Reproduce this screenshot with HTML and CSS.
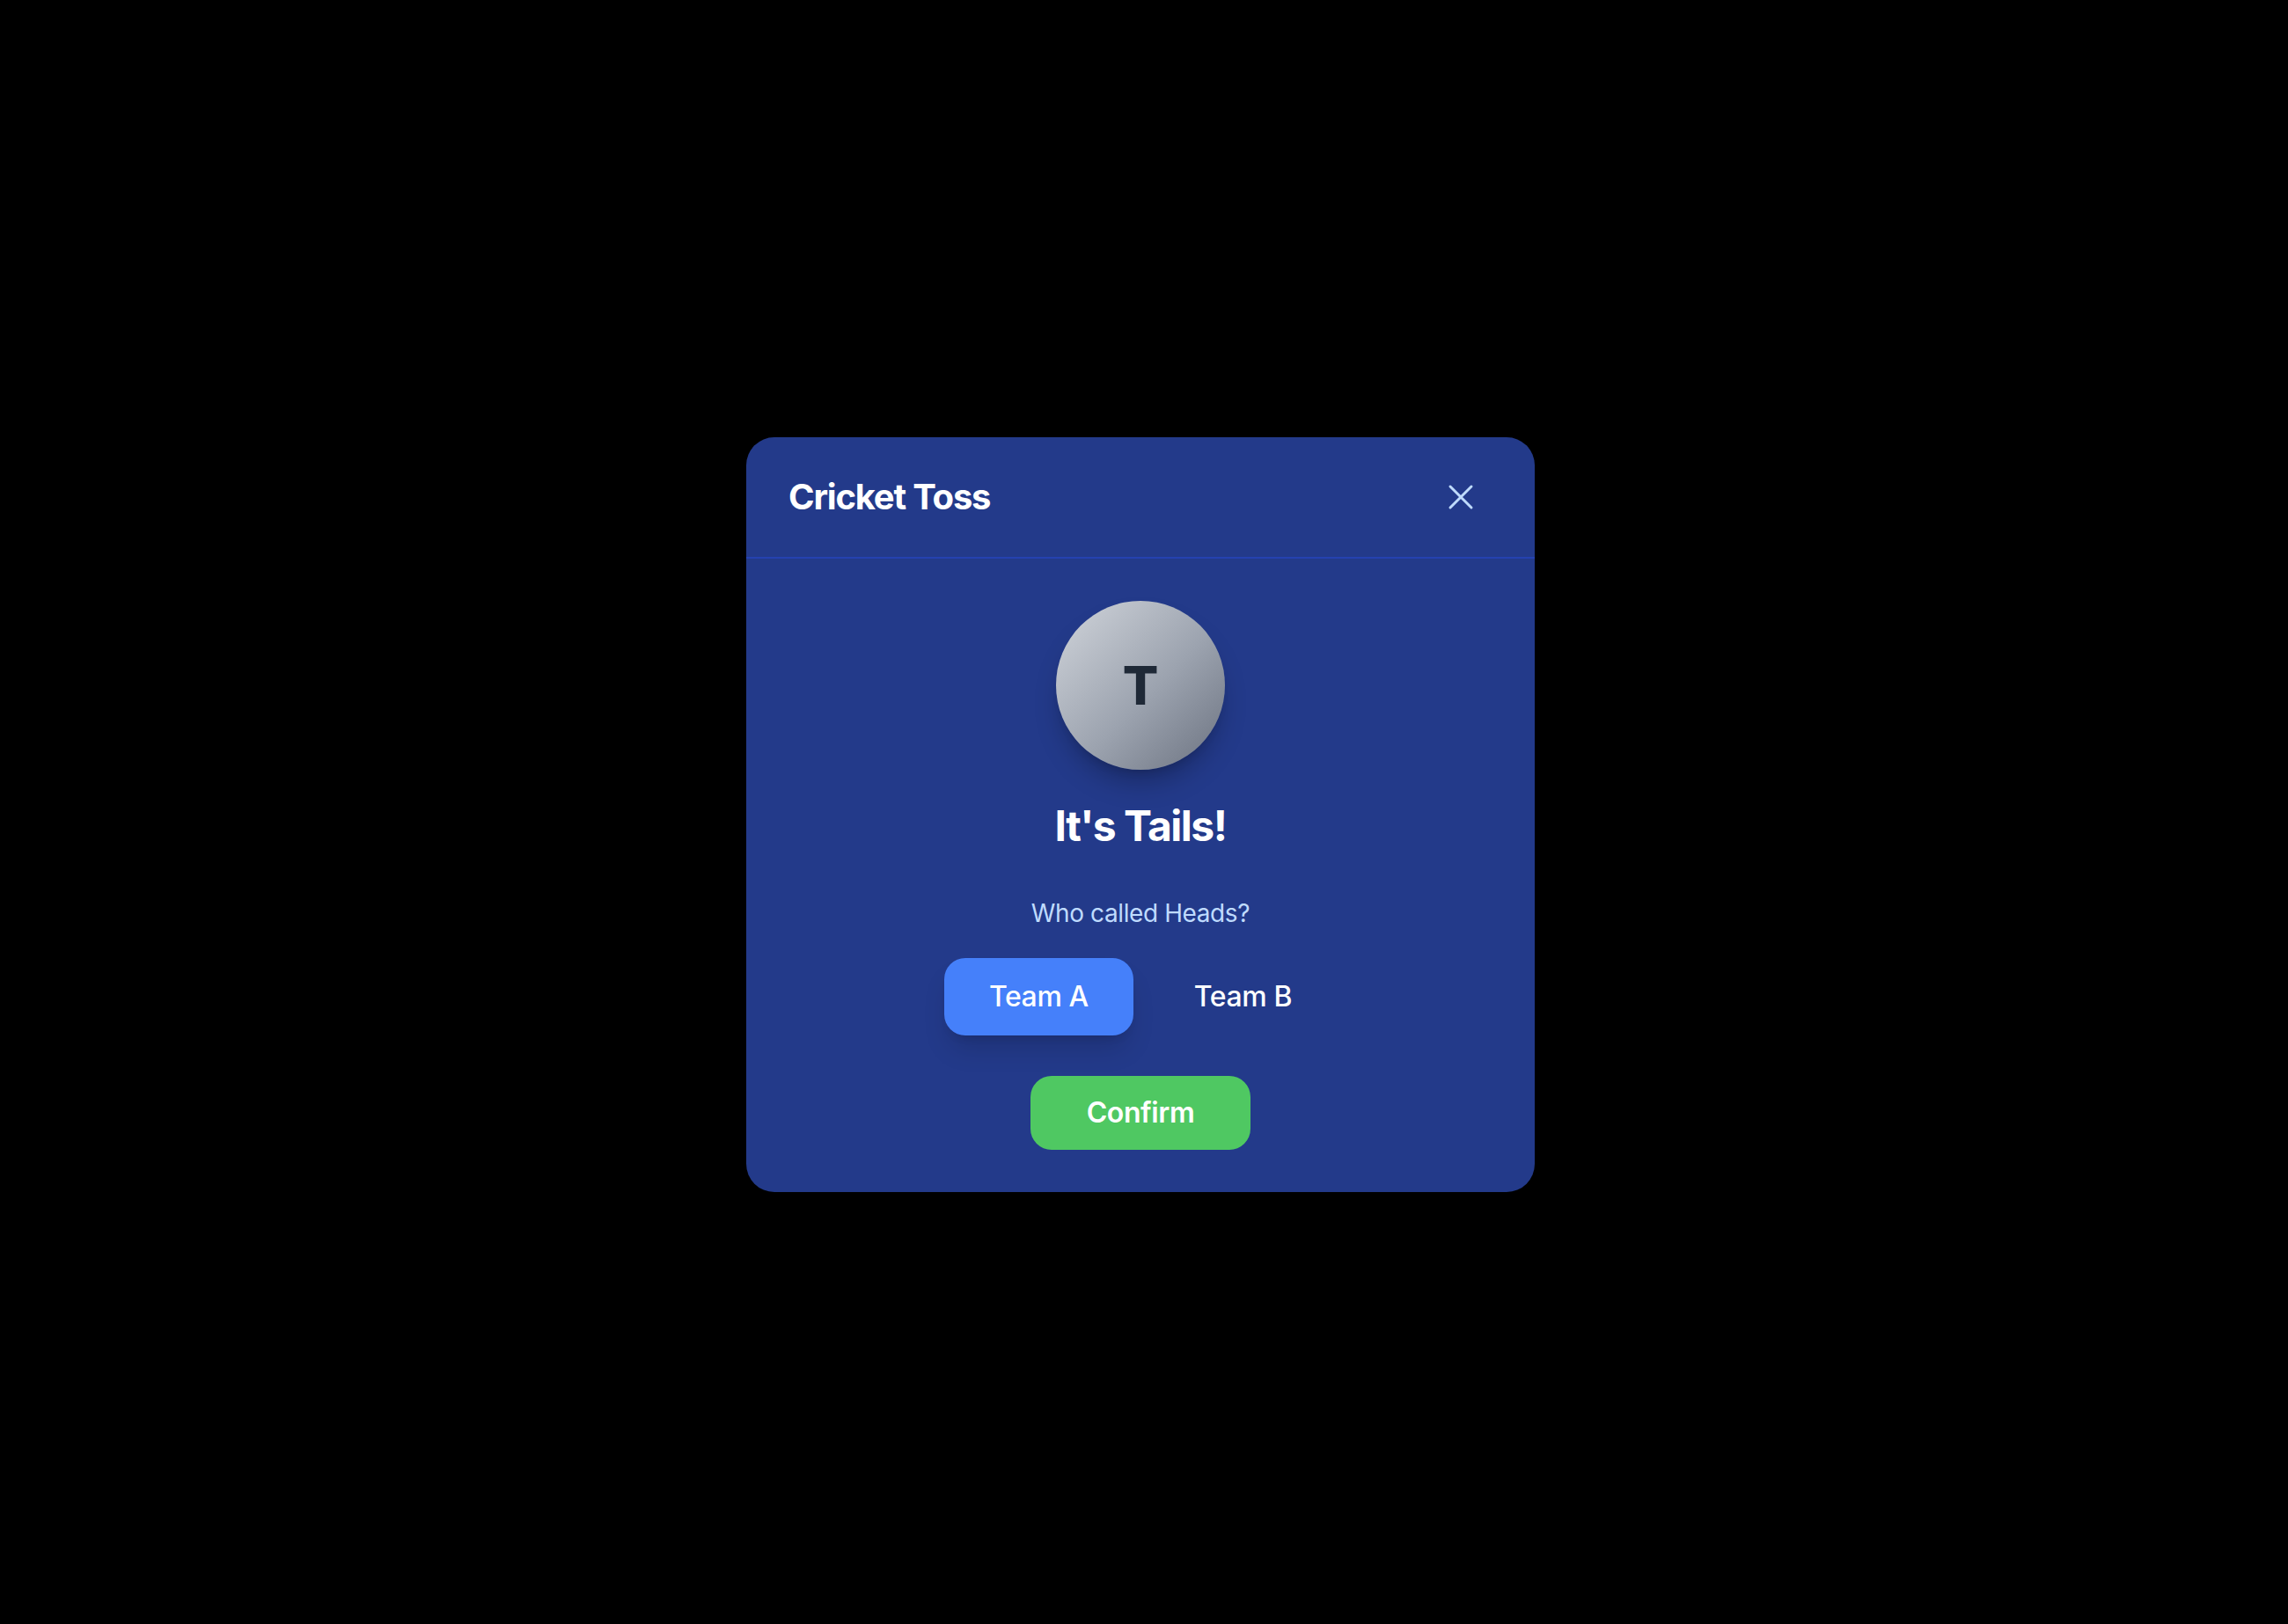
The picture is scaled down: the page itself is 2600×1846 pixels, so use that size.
FILE: index.html
```html
<!DOCTYPE html>
<html lang="en">
<head>
<meta charset="utf-8">
<title>Cricket Toss</title>
<link rel="stylesheet" href="styles.css">
</head>
<body>
<div class="modal">
  <div class="modal-header">
    <h2 class="modal-title">Cricket Toss</h2>
    <button class="close-btn" aria-label="Close">
      <svg width="48" height="48" viewBox="0 0 24 24" fill="none" stroke="currentColor" stroke-width="1.5" stroke-linecap="round"><path d="M6 6L18 18M18 6L6 18"/></svg>
    </button>
  </div>
  <div class="modal-body">
    <div class="coin"><span>T</span></div>
    <h3 class="result">It's Tails!</h3>
    <p class="question">Who called Heads?</p>
    <div class="teams">
      <button class="team team-active">Team A</button>
      <button class="team">Team B</button>
    </div>
    <button class="confirm">Confirm</button>
  </div>
</div>
</body>
</html>
```
FILE: styles.css
```css
html, body {
  margin: 0;
  padding: 0;
  height: 100%;
}
body {
  background: #000;
  font-family: Inter, "Noto Sans", sans-serif;
  display: flex;
  align-items: center;
  justify-content: center;
}
.modal {
  width: 896px;
  background: #233a8a;
  border-radius: 32px;
  margin-right: 8px;
  margin-top: 6px;
  overflow: hidden;
}
.modal-header {
  display: flex;
  align-items: center;
  justify-content: space-between;
  padding: 40px 48px;
  border-bottom: 2px solid #2541b0;
}
.modal-title {
  margin: 0;
  color: #fff;
  font-size: 40px;
  line-height: 56px;
  font-weight: 700;
  letter-spacing: -1.2px;
}
.close-btn {
  background: none;
  border: 0;
  padding: 0;
  margin-right: 12px;
  color: #bfdbfe;
  display: flex;
}
.modal-body {
  padding: 48px 48px 48px;
  display: flex;
  flex-direction: column;
  align-items: center;
}
.coin {
  width: 192px;
  height: 192px;
  border-radius: 50%;
  background: linear-gradient(135deg, #d1d5db 0%, #9ca3af 55%, #6b7280 100%);
  box-shadow: 0 20px 30px -6px rgba(0, 0, 0, 0.25), 0 8px 12px -8px rgba(0, 0, 0, 0.2);
  display: flex;
  align-items: center;
  justify-content: center;
  margin-bottom: 32px;
}
.coin span {
  color: #1f2937;
  font-size: 60px;
  font-weight: 800;
  line-height: 1;
}
.result {
  margin: 0 0 47px;
  color: #fff;
  font-size: 48px;
  line-height: 64px;
  font-weight: 700;
  letter-spacing: -1.5px;
}
.question {
  margin: 0 0 31px;
  color: #bfdbfe;
  font-size: 28px;
  line-height: 40px;
  letter-spacing: -0.4px;
}
.teams {
  display: flex;
  gap: 18px;
  margin-bottom: 46px;
}
.team {
  font-family: inherit;
  font-size: 32px;
  line-height: 48px;
  font-weight: 550;
  color: #fff;
  background: transparent;
  border: 0;
  border-radius: 24px;
  padding: 20px 51px;
  letter-spacing: -0.4px;
}
.team-active {
  background: #4580fa;
  box-shadow: 0 20px 30px -6px rgba(0, 0, 0, 0.15), 0 8px 12px -8px rgba(0, 0, 0, 0.15);
}
.confirm {
  font-family: inherit;
  font-size: 32px;
  line-height: 48px;
  font-weight: 600;
  color: #fff;
  background: #4fc862;
  border: 0;
  border-radius: 24px;
  padding: 18px 64px;
  letter-spacing: -0.4px;
}
```
